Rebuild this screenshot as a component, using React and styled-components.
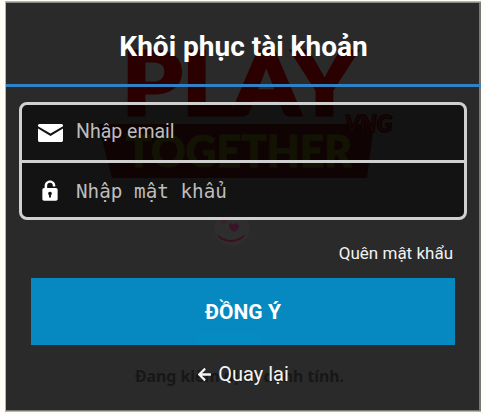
import styled, { createGlobalStyle } from 'styled-components';
import { FaArrowLeft } from 'react-icons/fa';

const GlobalStyle = createGlobalStyle`
  html, body {
    margin: 0;
    height: 100%;
    background: #fffdf6;
    overflow: hidden;
  }
  * {
    box-sizing: border-box;
  }
`;

function MailIcon() {
  return (
    <svg width="25" height="18" viewBox="0 0 25 18" fill="#fff">
      <path d="M1.6 0h21.8c.9 0 1.6.7 1.6 1.6v.6L12.5 9.5 0 2.2v-.6C0 .7.7 0 1.6 0z" />
      <path d="M0 4.6l12.5 7.3L25 4.6v11.600c0 1-.8 1.800-1.800 1.800H1.800C.8 18 0 17.200 0 16.200V4.600z" />
    </svg>
  );
}

function LockIcon() {
  return (
    <svg width="16" height="21" viewBox="0 0 16 22" fill="#fff">
      <path d="M2.4 8.5V6.2C2.4 2.8 4.8.4 8 .4s5.6 2.4 5.6 5.8v.7h-2.600v-.7C11 4.200 9.800 3 8 3S5 4.200 5 6.200v2.300z" />
      <path
        fillRule="evenodd"
        d="M1.8 8.5h12.4c1 0 1.8.8 1.8 1.8V20c0 1-.8 1.8-1.8 1.8H1.8C.8 21.800 0 21 0 20v-9.700c0-1 .8-1.800 1.800-1.800zM8 12.200a2 2 0 0 0-1 3.700v2.500h2v-2.500a2 2 0 0 0-1-3.700z"
      />
    </svg>
  );
}

function Watermark() {
  return (
    <WatermarkArt viewBox="0 0 476 410" width="476" height="410">
      <polygon points="92,122 368,122 361,176 106,176" fill="#240808" />
      <text x="116" y="113" fontFamily="Lato" fontWeight="900" fontSize="88" textLength="234" lengthAdjust="spacingAndGlyphs" stroke="#2b0000" strokeWidth="3" fill="#2b0000">
        PLAY
      </text>
      <text x="120" y="165" fontFamily="Lato" fontWeight="900" fontSize="44" textLength="226" lengthAdjust="spacingAndGlyphs" stroke="#2a2a0a" strokeWidth="1" fill="#2a2a0a">
        TOGETHER
      </text>
      <text x="339" y="130" fontFamily="Lato" fontStyle="italic" fontWeight="900" fontSize="23" stroke="#300000" strokeWidth="1.5" fill="#1c1c1c">
        VNG
      </text>
      <circle cx="226" cy="226" r="18" fill="#2e2e2e" />
      <path d="M211 232q14 12 28 0l-2 4q-12 8-24 0z" fill="#3a1020" />
      <circle cx="218" cy="219" r="2.5" fill="#3a2028" />
      <path d="M227 223c2-3 6-2 6 1s-3 5-5 6c-2-1-5-3-5-6s3-4 4-1z" fill="#3a1428" />
      <rect x="192" y="331" width="62" height="10" rx="4" fill="#0a74a4" />
    </WatermarkArt>
  );
}

export default function App() {
  return (
    <>
      <GlobalStyle />
      <Frame>
        <Watermark />
        <Heading>Khôi phục tài khoản</Heading>
        <Form>
          <Fields>
            <Field>
              <IconSlot>
                <MailIcon />
              </IconSlot>
              <Input type="email" placeholder="Nhập email" />
            </Field>
            <Field $divided>
              <IconSlot>
                <LockIcon />
              </IconSlot>
              <Input $mono placeholder="Nhập mật khẩu" />
            </Field>
          </Fields>
          <ForgotRow>
            <ForgotLink>Quên mật khẩu</ForgotLink>
          </ForgotRow>
          <Submit type="button">ĐỒNG Ý</Submit>
          <BackRow>
            <GhostNote>Đang kiểm định danh tính.</GhostNote>
            <BackLink>
              <FaArrowLeft size={15} />
              Quay lại
            </BackLink>
          </BackRow>
        </Form>
      </Frame>
    </>
  );
}

const Frame = styled.div`
  position: relative;
  width: 476px;
  height: 411px;
  margin: 1px 0 0 5px;
  background: #2a2a2a;
  border-style: solid;
  border-width: 1px 0 1px 1px;
  border-color: #eeb32e;
  box-shadow: inset 0 1px 0 #8a8a8a, inset -2px 0 0 #777, inset 0 -1px 0 #777;
  font-family: Roboto, 'Noto Sans', sans-serif;
  color: #fff;
  overflow: hidden;
`;

const WatermarkArt = styled.svg`
  position: absolute;
  top: 0;
  left: 0;
`;

const Heading = styled.h1`
  position: relative;
  margin: 0;
  height: 85px;
  padding-top: 28px;
  border-bottom: 3px solid #2f82c6;
  font-size: 28px;
  line-height: 34px;
  font-weight: 700;
  text-align: center;
  color: #fff;
`;

const Form = styled.div`
  position: relative;
  display: flex;
  flex-direction: column;
  padding: 15px 0 0 13px;
`;

const Fields = styled.div`
  width: 448px;
  height: 118px;
  border: 3px solid #d0d0d0;
  border-radius: 8px;
  background: rgba(0, 0, 0, 0.55);
  overflow: hidden;
`;

const Field = styled.div`
  display: flex;
  align-items: center;
  height: ${(p) => (p.$divided ? '57px' : '55px')};
  ${(p) => p.$divided && 'border-top: 3px solid #d0d0d0;'}
`;

const IconSlot = styled.span`
  display: flex;
  justify-content: center;
  flex: 0 0 54px;
  padding-left: 2px;
`;

const Input = styled.input`
  flex: 1;
  min-width: 0;
  border: 0;
  padding: ${(p) => (p.$mono ? '2px 0 0' : '0 0 2px')};
  background: transparent;
  outline: none;
  color: #fff;
  font-family: ${(p) => (p.$mono ? "'DejaVu Sans Mono', monospace" : 'Roboto, sans-serif')};
  font-size: ${(p) => (p.$mono ? '19.3px' : '19.5px')};
  &::placeholder {
    color: #bdbdbd;
    opacity: 1;
  }
`;

const ForgotRow = styled.div`
  display: flex;
  justify-content: flex-end;
  width: 434px;
  margin-top: 22px;
`;

const ForgotLink = styled.a`
  font-size: 17px;
  line-height: 22px;
  color: #f2f2f2;
`;

const Submit = styled.button`
  width: 424px;
  height: 67px;
  margin: 14px 0 0 12px;
  border: 0;
  padding: 0;
  background: rgba(5, 140, 196, 0.98);
  color: #fff;
  font-family: Roboto, sans-serif;
  font-size: 21px;
  font-weight: 700;
`;

const BackRow = styled.div`
  position: relative;
  display: flex;
  justify-content: center;
  width: 448px;
  margin-top: 17px;
`;

const GhostNote = styled.span`
  position: absolute;
  top: 3px;
  left: 116px;
  font-family: 'Noto Sans', sans-serif;
  font-size: 15.8px;
  line-height: 22px;
  font-weight: 700;
  white-space: nowrap;
  color: #171717;
`;

const BackLink = styled.a`
  position: relative;
  display: flex;
  align-items: center;
  gap: 6px;
  font-size: 20px;
  line-height: 24px;
  color: #f5f5f5;
`;
